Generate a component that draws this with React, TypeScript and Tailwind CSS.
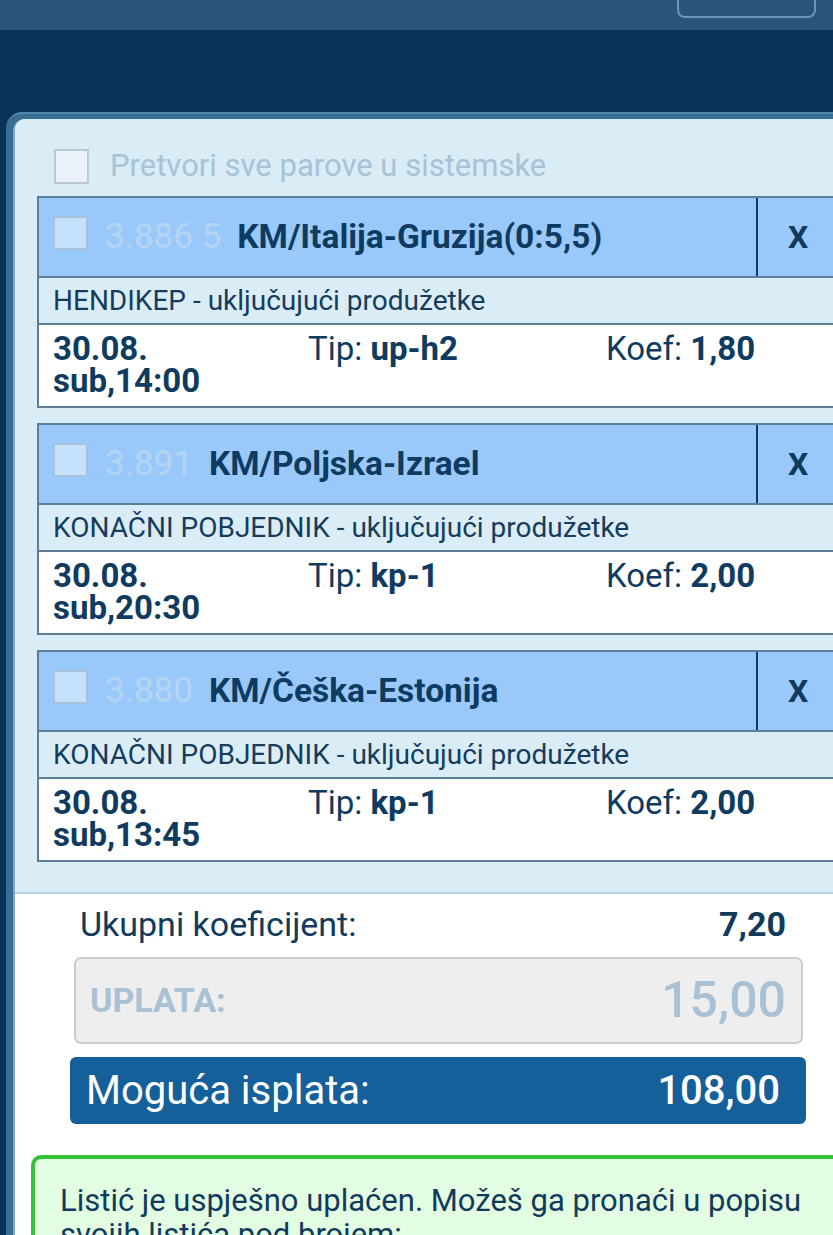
import React from "react";

type Pick = {
  id: string;
  title: string;
  market: string;
  date: string;
  time: string;
  tip: string;
  koef: string;
};

const picks: Pick[] = [
  {
    id: "3.886 5",
    title: "KM/Italija-Gruzija(0:5,5)",
    market: "HENDIKEP - uključujući produžetke",
    date: "30.08.",
    time: "sub,14:00",
    tip: "up-h2",
    koef: "1,80",
  },
  {
    id: "3.891",
    title: "KM/Poljska-Izrael",
    market: "KONAČNI POBJEDNIK - uključujući produžetke",
    date: "30.08.",
    time: "sub,20:30",
    tip: "kp-1",
    koef: "2,00",
  },
  {
    id: "3.880",
    title: "KM/Češka-Estonija",
    market: "KONAČNI POBJEDNIK - uključujući produžetke",
    date: "30.08.",
    time: "sub,13:45",
    tip: "kp-1",
    koef: "2,00",
  },
];

function PickCard({ p }: { p: Pick }) {
  return (
    <div className="ml-[22px] mr-[-60px] border-2 border-[#5d7e99]">
      {/* header */}
      <div className="flex h-[78px] bg-[#99c9fb]">
        <div className="flex flex-1 items-center pl-[14px]">
          <span className="mb-[8px] h-[34px] w-[35px] shrink-0 border-2 border-[#a9c1d6] bg-[#c6e1fc]" />
          <span className="ml-[17px] whitespace-nowrap text-[35px] text-[#b6d4f1]">{p.id}</span>
          <span className="ml-[16px] whitespace-nowrap text-[33.5px] font-bold text-[#0f3b60]">{p.title}</span>
        </div>
        <div className="flex w-[135px] items-center border-l-2 border-[#0d3c69] pl-[30px] text-[32px] font-bold text-[#0f3b60]">
          X
        </div>
      </div>
      {/* market */}
      <div className="flex h-[47px] items-center whitespace-nowrap border-t-2 border-[#5d7e99] bg-[#daecf5] pl-[14px] text-[28px] text-[#163c5d]">
        {p.market}
      </div>
      {/* details */}
      <div className="flex border-t-2 border-[#5d7e99] bg-white pb-[9px] pl-[14px] pt-[8px] text-[33px] leading-[32px] text-[#0f3b60]">
        <div className="w-[255px] font-bold">
          <div>{p.date}</div>
          <div>{p.time}</div>
        </div>
        <div className="w-[298px] whitespace-nowrap">
          Tip: <span className="font-bold">{p.tip}</span>
        </div>
        <div className="whitespace-nowrap">
          Koef: <span className="font-bold">{p.koef}</span>
        </div>
      </div>
    </div>
  );
}

export default function App() {
  return (
    <div className="h-[1235px] overflow-hidden bg-[#0a3358] font-['Roboto','Liberation_Sans',sans-serif]">
      {/* top bar */}
      <div className="h-[30px] bg-[#2a5579]">
        <div className="ml-[677px] h-[18px] w-[139px] rounded-b-[8px] border-x-2 border-b-2 border-[#6d94ba]" />
      </div>
      <div className="h-[82px]" />

      {/* ticket panel */}
      <div className="ml-[6px] rounded-tl-[16px] border-t-2 border-[#5189ad] bg-[#376e92] pl-[7px] pt-[5px]">
        <div className="rounded-tl-[12px] border-l-2 border-[#7fa9c4] bg-white">
          <div className="rounded-tl-[10px] bg-[#daecf5] pb-[30px] pt-[30px]">
            <div className="flex h-[34px] items-center pl-[39px]">
              <span className="h-[35px] w-[35px] shrink-0 border-2 border-[#b9c9d3] bg-[#e8f2f8]" />
              <span className="ml-[21px] whitespace-nowrap text-[31px] text-[#a8c2d6]">Pretvori sve parove u sistemske</span>
            </div>
            <div className="mt-[13px] flex flex-col gap-[15px]">
              {picks.map((p) => (
                <PickCard key={p.title} p={p} />
              ))}
            </div>
          </div>

          {/* totals */}
          <div className="border-t-2 border-[#b8d1e1] bg-white pt-[11px]">
            <div className="flex h-[38px] items-center justify-between pl-[65px] pr-[47px] text-[34px] text-[#123a5c]">
              <span>Ukupni koeficijent:</span>
              <span className="font-bold">7,20</span>
            </div>
            <div className="ml-[59px] mr-[30px] mt-[14px] flex h-[87px] items-center justify-between rounded-[7px] border-2 border-[#cccccc] bg-[#eeeeee] pl-[14px] pr-[15px] text-[#a8c1d5]">
              <span className="text-[34px] font-bold">UPLATA:</span>
              <span className="text-[50px] font-medium">15,00</span>
            </div>
            <div className="ml-[55px] mr-[27px] mt-[13px] flex h-[67px] items-center justify-between rounded-[6px] bg-[#15609a] pl-[16px] pr-[26px] text-[40px] text-white">
              <span>Moguća isplata:</span>
              <span className="font-medium">108,00</span>
            </div>
            <div className="ml-[16px] mr-[-20px] mt-[31px] rounded-[10px] border-4 border-[#33c233] bg-[#e2fde2] pb-[20px] pl-[25px] pr-[40px] pt-[25px] text-[31px] leading-[34px] text-[#123a5c]">
              Listić je uspješno uplaćen. Možeš ga pronaći u popisu svojih listića pod brojem:
            </div>
          </div>
        </div>
      </div>
    </div>
  );
}
